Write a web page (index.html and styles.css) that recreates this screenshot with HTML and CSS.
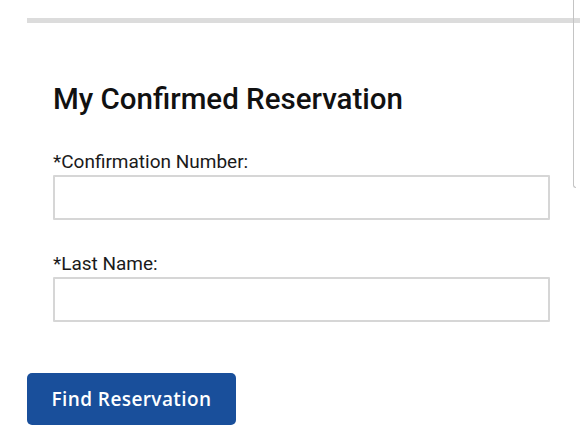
FILE: index.html
```html
<!DOCTYPE html>
<html>
<head>
<meta charset="utf-8">
<link rel="stylesheet" href="styles.css">
</head>
<body>
<div class="page">
  <div class="topbar"></div>
  <div class="edge"></div>
  <form class="form">
    <h1 class="title">My Confirmed Reservation</h1>
    <label class="label">*Confirmation Number:</label>
    <div class="input"></div>
    <label class="label label-2">*Last Name:</label>
    <div class="input input-2"></div>
  </form>
  <button class="btn">Find Reservation</button>
</div>
</body>
</html>
```
FILE: styles.css
```css
html, body {
  margin: 0;
  padding: 0;
  background: #ffffff;
}
.page {
  position: relative;
  width: 580px;
  height: 435px;
  overflow: hidden;
  font-family: Roboto, "Liberation Sans", sans-serif;
  color: #111;
}
.topbar {
  margin: 18px 0 0 27px;
  height: 5px;
  background: #dcdcdc;
}
.edge {
  position: absolute;
  top: 0;
  left: 573px;
  width: 2px;
  height: 187px;
  border-left: 1px solid #c4c4c4;
  border-bottom: 1px solid #c4c4c4;
  border-bottom-left-radius: 4px;
}
.form {
  display: flex;
  flex-direction: column;
  padding: 0 30px 0 53px;
  margin: 0;
}
.title {
  font-size: 29.5px;
  font-weight: 500;
  margin: 58px 0 0 0;
  line-height: 36px;
  color: #111;
}
.label {
  font-size: 19px;
  line-height: 22px;
  margin-top: 34px;
  color: #1a1a1a;
}
.label-2 {
  margin-top: 33px;
}
.input {
  margin-top: 2px;
  width: 493px;
  height: 41px;
  border: 2px solid #d6d6d6;
  border-radius: 1px;
  background: #fff;
}
.input-2 {
  margin-top: 2px;
}
.btn {
  display: block;
  margin: 51px 0 0 27px;
  width: 209px;
  height: 52px;
  border: none;
  border-radius: 5px;
  background: #194f9b;
  color: #fff;
  font-family: "Open Sans", "Liberation Sans", sans-serif;
  font-weight: 600;
  font-size: 19px;
  letter-spacing: 0.4px;
  padding: 0;
}
```
